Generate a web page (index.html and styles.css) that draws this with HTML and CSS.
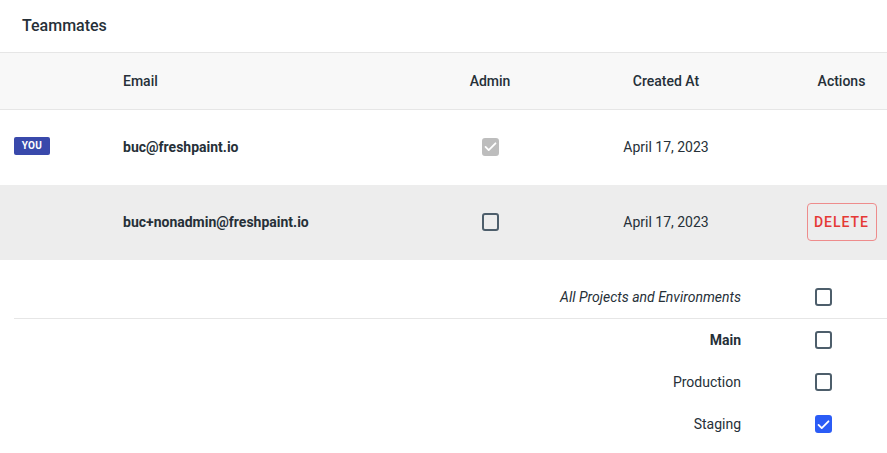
FILE: index.html
```html
<!DOCTYPE html>
<html lang="en">
<head>
    <meta charset="UTF-8">
    <title>Teammates</title>
    <link rel="stylesheet" href="styles.css">
</head>
<body>
    <div class="panel">
        <div class="panel-title">Teammates</div>
        <div class="team-table">
            <div class="row head">
                <div class="cell"></div>
                <div class="cell">Email</div>
                <div class="cell center">Admin</div>
                <div class="cell center">Created At</div>
                <div class="cell actions">Actions</div>
            </div>
            <div class="row">
                <div class="cell"><span class="badge">YOU</span></div>
                <div class="cell email">buc@freshpaint.io</div>
                <div class="cell center"><span class="check disabled"><svg viewBox="0 0 24 24"><path d="M5 12.5l4.5 4.5L19 7.5" /></svg></span></div>
                <div class="cell center">April 17, 2023</div>
                <div class="cell actions"></div>
            </div>
            <div class="row selected">
                <div class="cell"></div>
                <div class="cell email">buc+nonadmin@freshpaint.io</div>
                <div class="cell center"><span class="check"></span></div>
                <div class="cell center">April 17, 2023</div>
                <div class="cell actions"><button class="btn-delete">DELETE</button></div>
            </div>
        </div>
        <div class="perms">
            <div class="perm all">
                <span class="perm-label"><em>All Projects and Environments</em></span>
                <span class="check"></span>
            </div>
            <div class="perm">
                <span class="perm-label"><strong>Main</strong></span>
                <span class="check"></span>
            </div>
            <div class="perm">
                <span class="perm-label">Production</span>
                <span class="check"></span>
            </div>
            <div class="perm">
                <span class="perm-label">Staging</span>
                <span class="check on"><svg viewBox="0 0 24 24"><path d="M5 12.5l4.5 4.5L19 7.5" /></svg></span>
            </div>
        </div>
    </div>
</body>
</html>
```

FILE: styles.css
```css
* {
    margin: 0;
    padding: 0;
    box-sizing: border-box;
}
body {
    font-family: Roboto, 'Liberation Sans', sans-serif;
    color: #263038;
    background: #fff;
}
.panel {
    width: 887px;
}
.panel-title {
    height: 53px;
    line-height: 52px;
    padding: 0 22px;
    font-size: 16px;
    font-weight: 500;
    border-bottom: 1px solid #e6e6e6;
}
.row {
    display: grid;
    grid-template-columns: 109px 321px 120px 232px 105px;
    height: 75px;
    align-items: center;
    font-size: 14px;
    padding-bottom: 2px;
}
.row.head {
    height: 57px;
    background: #f8f8f8;
    border-bottom: 1px solid #e6e6e6;
    font-weight: 500;
    padding-bottom: 0;
}
.row.selected {
    background: #ededed;
}
.cell {
    padding: 0 14px;
    display: flex;
    align-items: center;
}
.cell.center {
    justify-content: center;
    padding: 0;
}
.cell.actions {
    justify-content: center;
    padding: 0 0 0 14px;
}
.cell.email {
    font-weight: 700;
}
.badge {
    display: inline-block;
    width: 36px;
    height: 18px;
    line-height: 18px;
    text-align: center;
    background: #3949ab;
    color: #fff;
    font-size: 10px;
    font-weight: 700;
    letter-spacing: 0.4px;
    border-radius: 2px;
    margin-top: -1px;
}
.check {
    display: inline-flex;
    align-items: center;
    justify-content: center;
    width: 17px;
    height: 18px;
    border: 2px solid #4d5e6b;
    border-radius: 3px;
}
.check svg {
    width: 17px;
    height: 17px;
    flex-shrink: 0;
    fill: none;
    stroke: #fff;
    stroke-width: 2.6;
    stroke-linecap: round;
    stroke-linejoin: round;
}
.check.disabled {
    background: #bdbdbd;
    border-color: #bdbdbd;
}
.check.on {
    background: #2b5cf6;
    border-color: #2b5cf6;
}
.btn-delete {
    width: 70px;
    height: 38px;
    border: 1px solid #ee8c8c;
    border-radius: 4px;
    background: transparent;
    color: #e53935;
    font-family: inherit;
    font-size: 14px;
    font-weight: 500;
    letter-spacing: 1px;
}
.perms {
    padding-top: 16px;
    margin-left: 14px;
}
.perm {
    display: flex;
    align-items: center;
    justify-content: flex-end;
    height: 42px;
    font-size: 14px;
}
.perm.all {
    height: 43px;
    border-bottom: 1px solid #e6e6e6;
}
.perm .check {
    margin: 0 55px 0 74px;
}
```
